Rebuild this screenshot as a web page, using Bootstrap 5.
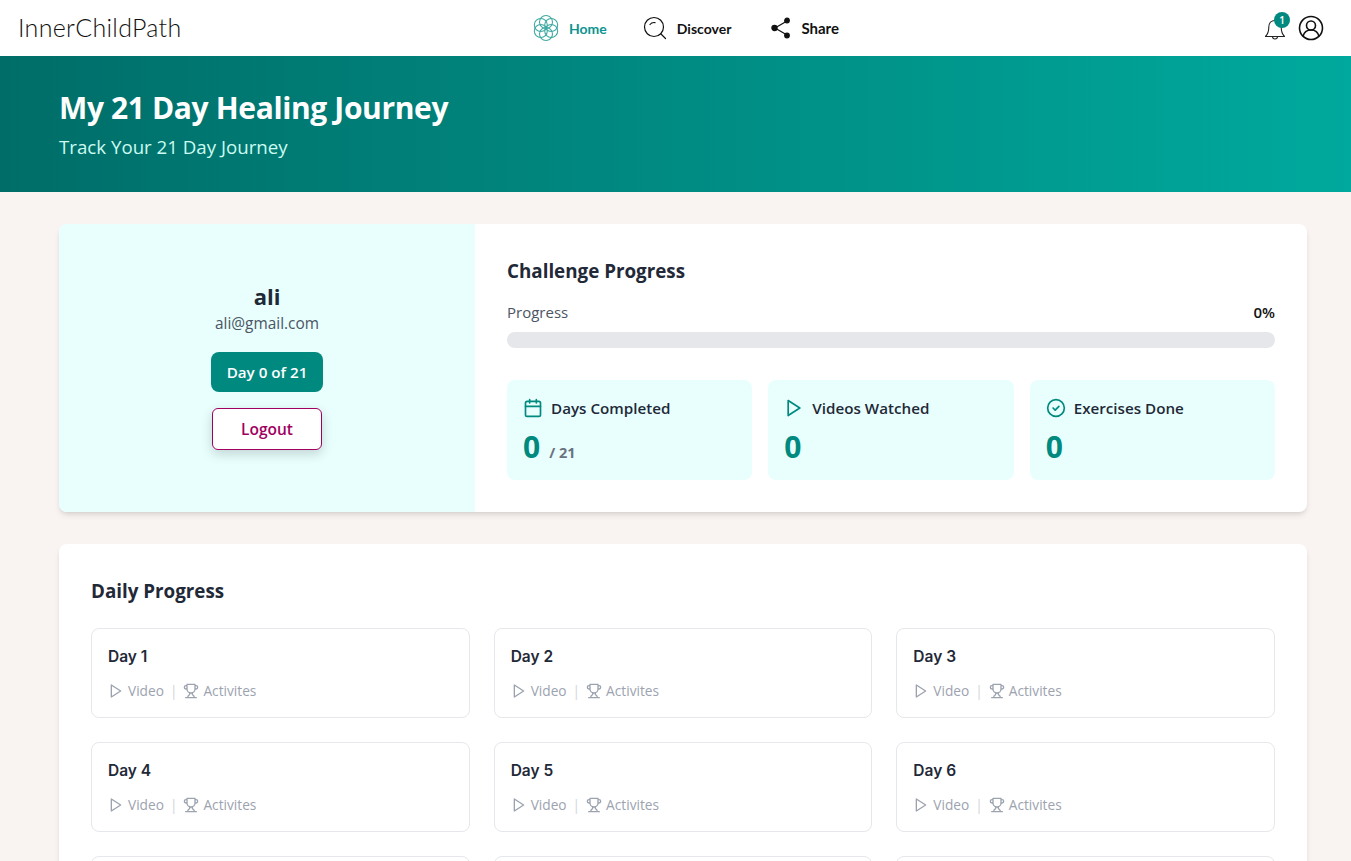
<!DOCTYPE html>
<html lang="en">
<head>
    <meta charset="UTF-8">
    <meta name="viewport" content="width=device-width, initial-scale=1.0">
    <title>InnerChildPath</title>
    <link href="https://cdn.jsdelivr.net/npm/bootstrap@5.3.3/dist/css/bootstrap.min.css" rel="stylesheet">
    <style>
        body {
            background-color: #f9f4f1;
            font-family: "Open Sans", "Noto Sans", sans-serif;
            color: #1f2937;
        }

        .top-bar {
            height: 56px;
            padding: 0 18px;
            background-color: #fff;
        }

        .brand-name {
            width: 499px;
            font-family: "Lato", sans-serif;
            font-weight: 300;
            font-size: 25px;
            letter-spacing: 0.3px;
            color: #111;
            text-decoration: none;
        }

        .main-links {
            gap: 36px;
            padding-left: 16px;
        }

        .main-link {
            font-family: "Lato", sans-serif;
            font-size: 14px;
            font-weight: 700;
            color: #111;
            text-decoration: none;
            gap: 10px;
        }

        .main-link.active-link {
            color: #0b9490;
        }

        .share-link {
            margin-left: 4px;
            font-size: 15px;
        }

        .right-icons {
            gap: 11px;
            padding-right: 9px;
        }

        .bell-wrap {
            width: 24px;
            height: 24px;
        }

        .bell-count {
            top: -4px;
            right: -3px;
            width: 16px;
            height: 16px;
            font-size: 10px;
            line-height: 16px;
            font-weight: 600;
            background-color: #00897f;
            color: #fff;
        }

        .hero {
            height: 136px;
            padding: 34px 59px 0;
            background: linear-gradient(90deg, #006d68, #00a99d);
        }

        .hero h1 {
            margin: 0;
            font-size: 30px;
            line-height: 36px;
            font-weight: 700;
            letter-spacing: -0.37px;
            color: #fff;
        }

        .hero p {
            margin: 7px 0 0;
            font-size: 18.7px;
            line-height: 28px;
            color: #ccfbf1;
        }

        .page-wrap {
            padding: 32px 44px 32px 59px;
        }

        .panel {
            background-color: #fff;
            border-radius: 8px;
            overflow: hidden;
            box-shadow: 0 4px 6px -1px #0000001a, 0 2px 4px -2px #0000001a;
            margin-bottom: 32px;
        }

        .panel-body {
            padding: 32px;
        }

        .user-col {
            width: 416px;
            flex: none;
            padding-bottom: 4px;
            background-color: #e8fffe;
        }

        .user-name {
            font-size: 22px;
            line-height: 28px;
            font-weight: 700;
            margin: 0 0 2px;
        }

        .user-mail {
            font-size: 15.4px;
            line-height: 24px;
            color: #4b5563;
            margin: 0 0 16px;
        }

        .day-pill {
            width: 112px;
            height: 40px;
            line-height: 40px;
            border-radius: 8px;
            background-color: #00897f;
            color: #fff;
            font-size: 15.2px;
            font-weight: 600;
        }

        .btn-logout {
            width: 110px;
            height: 42px;
            margin-top: 16px;
            padding-top: 3px;
            border: 1px solid #a0005f;
            border-radius: 6px;
            background-color: #fff;
            color: #a0005f;
            font-size: 15.5px;
            font-weight: 600;
            box-shadow: 0 4px 12px #0000002b;
        }

        .section-title {
            height: 28px;
            font-size: 18.8px;
            line-height: 30px;
            font-weight: 700;
            margin: 0;
        }

        .progress-label {
            font-size: 15px;
            line-height: 24px;
            color: #4b5563;
        }

        .progress-value {
            font-size: 15px;
            line-height: 24px;
            font-weight: 600;
            color: #111;
        }

        .progress-track {
            height: 16px;
            border-radius: 8px;
            background-color: #e5e7eb;
        }

        .stat-box {
            height: 100px;
            padding: 16px;
            border-radius: 8px;
            background-color: #e8fffe;
        }

        .stat-title {
            font-size: 15.2px;
            line-height: 24px;
            font-weight: 600;
            gap: 8px;
        }

        .stat-num {
            margin-top: 9px;
            font-size: 30px;
            line-height: 36px;
            font-weight: 700;
            color: #00897f;
        }

        .stat-of {
            font-size: 14.5px;
            font-weight: 700;
            color: #6b7280;
            margin-left: 9px;
        }

        .day-grid {
            display: grid;
            grid-template-columns: repeat(3, 1fr);
            gap: 24px;
            margin-top: 24px;
        }

        .day-box {
            height: 90px;
            padding: 16px;
            border: 1px solid #e5e7eb;
            border-radius: 8px;
        }

        .day-title {
            font-family: "Inter", sans-serif;
            font-size: 15.5px;
            line-height: 24px;
            font-weight: 600;
            color: #1f2937;
            margin: 0 0 12px;
        }

        .day-meta {
            font-size: 13.7px;
            line-height: 20px;
            color: #9ca3af;
            gap: 4px;
        }

        .meta-sep {
            margin: 0 2px;
            color: #d1d5db;
        }
    </style>
</head>
<body>
    <nav class="top-bar d-flex align-items-center">
        <a href="#" class="brand-name">InnerChildPath</a>
        <div class="main-links d-flex align-items-center flex-grow-1">
            <a href="#" class="main-link active-link d-flex align-items-center">
                <svg width="26" height="26" viewBox="1.500 1 23 24" fill="none" stroke="#3fa9a2" stroke-width="1">
                    <circle cx="13" cy="7.500" r="6"/>
                    <circle cx="13" cy="18.500" r="6"/>
                    <circle cx="8.200" cy="10.200" r="6"/>
                    <circle cx="17.800" cy="10.200" r="6"/>
                    <circle cx="8.200" cy="15.800" r="6"/>
                    <circle cx="17.800" cy="15.800" r="6"/>
                </svg>
                Home
            </a>
            <a href="#" class="main-link d-flex align-items-center">
                <svg width="24" height="24" viewBox="0 0 24 24" fill="none" stroke="#111" stroke-width="1.200" stroke-linecap="round">
                    <circle cx="11" cy="11" r="9.500"/>
                    <path d="M7 8.500c1.200-1.600 3-2.200 5-1.900M18 18l4.500 4.500"/>
                </svg>
                Discover
            </a>
            <a href="#" class="main-link share-link d-flex align-items-center">
                <svg width="20" height="22" viewBox="0 0 20 22" fill="#111" stroke="#111" stroke-width="1.200">
                    <path d="M16 4 4 11l12 7" fill="none"/>
                    <circle cx="3.500" cy="11" r="2.600"/>
                    <circle cx="16" cy="3.500" r="2.300"/>
                    <circle cx="16" cy="18.500" r="2.300"/>
                </svg>
                Share
            </a>
        </div>
        <div class="right-icons d-flex align-items-center">
            <div class="bell-wrap position-relative">
                <svg width="24" height="24" viewBox="0 0 24 24" fill="none" stroke="#222" stroke-width="1.100" stroke-linejoin="round">
                    <path d="M12 2.500c-4 0-6.200 3-6.200 6.500 0 5-1.300 7.500-3.300 9.500h19c-2-2-3.300-4.500-3.300-9.500 0-3.500-2.200-6.500-6.200-6.500z"/>
                    <path d="M9.500 18.500c0 3.300 5 3.300 5 0"/>
                </svg>
                <span class="bell-count position-absolute rounded-circle text-center">1</span>
            </div>
            <svg width="26" height="26" viewBox="0 0 26 26" fill="none" stroke="#111" stroke-width="1.600">
                <circle cx="13" cy="13" r="11.500"/>
                <circle cx="13" cy="10.500" r="4.500"/>
                <path d="M5 21.500c1-4.500 4-6.500 8-6.500s7 2 8 6.500"/>
            </svg>
        </div>
    </nav>

    <header class="hero">
        <h1>My 21 Day Healing Journey</h1>
        <p>Track Your 21 Day Journey</p>
    </header>

    <main class="page-wrap">
        <section class="panel d-flex">
            <div class="user-col d-flex flex-column align-items-center justify-content-center">
                <h2 class="user-name">ali</h2>
                <p class="user-mail">ali@gmail.com</p>
                <div class="day-pill text-center">Day 0 of 21</div>
                <button type="button" class="btn-logout">Logout</button>
            </div>
            <div class="panel-body flex-grow-1">
                <h3 class="section-title">Challenge Progress</h3>
                <div class="d-flex justify-content-between mt-3 mb-2">
                    <span class="progress-label">Progress</span>
                    <span class="progress-value">0%</span>
                </div>
                <div class="progress-track"></div>
                <div class="row g-3 mt-3">
                    <div class="col-4">
                        <div class="stat-box">
                            <div class="stat-title d-flex align-items-center">
                                <svg width="20" height="20" viewBox="0 0 24 24" fill="none" stroke="#00897f" stroke-width="2" stroke-linecap="round" stroke-linejoin="round">
                                    <rect x="3" y="4" width="18" height="18" rx="2"/>
                                    <path d="M16 2v4M8 2v4M3 10h18"/>
                                </svg>
                                Days Completed
                            </div>
                            <div class="stat-num">0<span class="stat-of">/ 21</span></div>
                        </div>
                    </div>
                    <div class="col-4">
                        <div class="stat-box">
                            <div class="stat-title d-flex align-items-center">
                                <svg width="20" height="20" viewBox="0 0 24 24" fill="none" stroke="#00897f" stroke-width="2" stroke-linejoin="round">
                                    <path d="M5 3l14 9-14 9z"/>
                                </svg>
                                Videos Watched
                            </div>
                            <div class="stat-num">0</div>
                        </div>
                    </div>
                    <div class="col-4">
                        <div class="stat-box">
                            <div class="stat-title d-flex align-items-center">
                                <svg width="20" height="20" viewBox="0 0 24 24" fill="none" stroke="#00897f" stroke-width="2" stroke-linecap="round" stroke-linejoin="round">
                                    <circle cx="12" cy="12" r="10"/>
                                    <path d="M8.500 12l2.500 2.500 4.500-4.500"/>
                                </svg>
                                Exercises Done
                            </div>
                            <div class="stat-num">0</div>
                        </div>
                    </div>
                </div>
            </div>
        </section>

        <section class="panel panel-body">
            <h3 class="section-title">Daily Progress</h3>
            <div class="day-grid" id="dayGrid"></div>
        </section>
    </main>

    <script>
        let grade = document.getElementById('dayGrid');

        for (let i = 1; i <= 21; i++) {
            grade.innerHTML += `
                <div class="day-box">
                    <h4 class="day-title">Day ${i}</h4>
                    <div class="day-meta d-flex align-items-center">
                        <svg width="16" height="16" viewBox="0 0 24 24" fill="none" stroke="#9ca3af" stroke-width="2" stroke-linejoin="round"><path d="M5 3l14 9-14 9z"/></svg>
                        Video
                        <span class="meta-sep">|</span>
                        <svg width="16" height="16" viewBox="0 0 24 24" fill="none" stroke="#9ca3af" stroke-width="2" stroke-linecap="round" stroke-linejoin="round"><path d="M6 9H4.500a2.500 2.500 0 0 1 0-5H6M18 9h1.500a2.500 2.500 0 0 0 0-5H18M4 22h16M10 14.700V17c0 .6-.5 1-1 1.200C7.800 18.800 7 20.200 7 22M14 14.700V17c0 .6.500 1 1 1.200 1.200.6 2 2 2 3.800M18 2H6v7a6 6 0 0 0 12 0V2z"/></svg>
                        Activites
                    </div>
                </div>
            `;
        }
    </script>
    <script src="https://cdn.jsdelivr.net/npm/bootstrap@5.3.3/dist/js/bootstrap.bundle.min.js"></script>
</body>
</html>
